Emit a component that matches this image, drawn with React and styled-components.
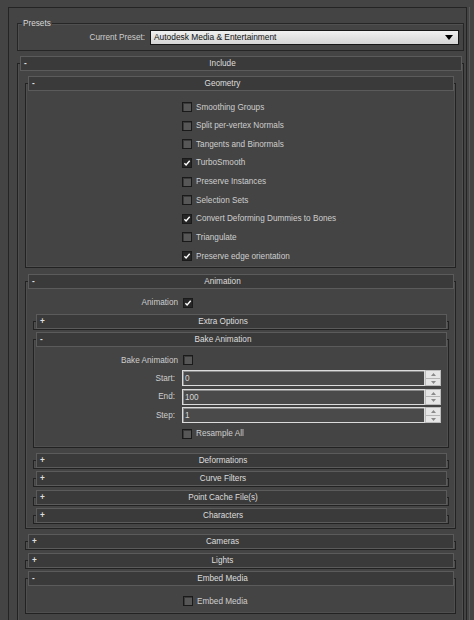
import React from "react";
import styled, { createGlobalStyle } from "styled-components";

const GlobalStyle = createGlobalStyle`
  html, body {
    margin: 0;
    background: #444444;
  }
  body {
    font-family: "Liberation Sans", Arial, sans-serif;
    font-size: 8.2px;
    line-height: 11px;
    color: #cecece;
  }
`;

const Panel = styled.div`
  box-sizing: border-box;
  width: 459px;
  margin: 7px 0 0 8px;
  padding: 0 2px 0 8px;
  border: 1px solid #242424;
  border-bottom: none;
  box-shadow: 2px 0 0 #444444, 3px 0 0 #5a5a5a;
`;

const GroupBox = styled.div`
  position: relative;
  margin-top: 15px;
  border: 1px solid #262626;
  box-shadow: inset 1px 1px 0 #505050;
  padding: 6px 4px 5px 4px;
  display: grid;
  grid-template-columns: 123px 1fr;
  column-gap: 5px;
  align-items: center;
`;

const GroupLabel = styled.span`
  position: absolute;
  top: -6px;
  left: 4px;
  padding: 0 1px;
  background: #444444;
  color: #d8d8d8;
`;

const Label = styled.span`
  text-align: right;
  padding-right: ${(p) => p.$pr || 0}px;
  white-space: nowrap;
`;

const Select = styled.div`
  box-sizing: border-box;
  height: 15px;
  display: flex;
  align-items: center;
  justify-content: space-between;
  padding: 0 5px 0 3px;
  border: 1px solid #161616;
  background: linear-gradient(#f0f0f0, #d4d4d4);
  color: #111111;
  font-size: 8.4px;
`;

const Frame = styled.section`
  border: 1px solid #222222;
  box-shadow: inset 1px 0 0 #4f4f4f, inset -1px 0 0 #4f4f4f, inset 0 -1px 0 #4f4f4f;
  margin-top: ${(p) => p.$mt ?? 9.5}px;
  margin-bottom: ${(p) => (p.$open ? 12 : 0)}px;
  padding: 0 1px 0 2px;
`;

const Bar = styled.div`
  box-sizing: border-box;
  height: 15px;
  margin-top: -8px;
  display: grid;
  grid-template-columns: 14px 1fr 14px;
  align-items: center;
  background: #3a3a3a;
  border: 1px solid #5b5b5b;
  color: #dedede;
`;

const Toggle = styled.span`
  padding-left: 3px;
  font-weight: bold;
`;

const Title = styled.span`
  text-align: center;
  padding-right: 37px;
`;

const Body = styled.div`
  padding: ${(p) => p.$pad};
`;

const CheckList = styled.div`
  display: flex;
  flex-direction: column;
  padding-left: ${(p) => p.$indent}px;
`;

const CheckRow = styled.label`
  display: flex;
  align-items: center;
  gap: 4px;
  height: ${(p) => p.$h || 14}px;
`;

const Box = styled.span`
  box-sizing: border-box;
  width: 10px;
  height: 10px;
  display: inline-flex;
  align-items: center;
  justify-content: center;
  border: 1px solid #1a1a1a;
  background: ${(p) => (p.$on ? "#262626" : "#575757")};
  box-shadow: ${(p) => (p.$on ? "none" : "inset 1px 1px 0 #3a3a3a")};
`;

const FieldRow = styled.div`
  display: grid;
  grid-template-columns: ${(p) => p.$label}px auto 1fr;
  column-gap: ${(p) => p.$gap}px;
  align-items: center;
  height: ${(p) => p.$h || 16}px;
  margin-top: ${(p) => p.$mt || 0}px;
  padding-right: ${(p) => p.$pr || 0}px;
`;

const SpinField = styled.div`
  grid-column: 2 / 4;
  display: flex;
  height: 16px;
`;

const Input = styled.div`
  box-sizing: border-box;
  flex: 1;
  border: 1px solid #dcdcdc;
  box-shadow: inset 1px 1px 0 #8a8a8a;
  background: #4a4a4a;
  color: #d6d6d6;
  padding: 2px 0 0 2px;
`;

const Spinner = styled.div`
  box-sizing: border-box;
  width: 16px;
  display: flex;
  flex-direction: column;
  border: 1px solid #bdbdbd;
  background: #e6e6e6;
`;

const SpinButton = styled.span`
  flex: 1;
  display: flex;
  align-items: center;
  justify-content: center;
  border-bottom: ${(p) => (p.$top ? "1px solid #b5b5b5" : "none")};
`;

function Check({ on }) {
  return (
    <Box $on={on}>
      {on && (
        <svg width="8" height="8" viewBox="0 0 8 8">
          <path d="M1.4 4.3 L3.1 6 L6.7 1.8" fill="none" stroke="#ffffff" strokeWidth="1.4" />
        </svg>
      )}
    </Box>
  );
}

function Rollout({ title, open, mt, pad, children }) {
  return (
    <Frame $open={open} $mt={mt}>
      <Bar>
        <Toggle>{open ? "-" : "+"}</Toggle>
        <Title>{title}</Title>
        <span />
      </Bar>
      {open && <Body $pad={pad}>{children}</Body>}
    </Frame>
  );
}

function Spin({ value }) {
  return (
    <SpinField>
      <Input>{value}</Input>
      <Spinner>
        <SpinButton $top>
          <svg width="5" height="3" viewBox="0 0 5 3">
            <path d="M0 3 L2.5 0 L5 3 Z" fill="#8a8a8a" />
          </svg>
        </SpinButton>
        <SpinButton>
          <svg width="5" height="3" viewBox="0 0 5 3">
            <path d="M0 0 L2.5 3 L5 0 Z" fill="#8a8a8a" />
          </svg>
        </SpinButton>
      </Spinner>
    </SpinField>
  );
}

const geometry = [
  ["Smoothing Groups", false],
  ["Split per-vertex Normals", false],
  ["Tangents and Binormals", false],
  ["TurboSmooth", true],
  ["Preserve Instances", false],
  ["Selection Sets", false],
  ["Convert Deforming Dummies to Bones", true],
  ["Triangulate", false],
  ["Preserve edge orientation", true],
];

const bakeFields = [
  ["Start:", "0"],
  ["End:", "100"],
  ["Step:", "1"],
];

const animationGroups = ["Deformations", "Curve Filters", "Point Cache File(s)", "Characters"];

export default function App() {
  return (
    <>
      <GlobalStyle />
      <Panel>
        <GroupBox>
          <GroupLabel>Presets</GroupLabel>
          <Label>Current Preset:</Label>
          <Select>
            <span>Autodesk Media &amp; Entertainment</span>
            <svg width="8" height="5" viewBox="0 0 8 5">
              <path d="M0 0 L8 0 L4 5 Z" fill="#000000" />
            </svg>
          </Select>
        </GroupBox>

        <Rollout title="Include" open mt={12} pad="1px 6px 40px 5px">
          <Rollout title="Geometry" open mt={11} pad="6.7px 0 2px 0">
            <CheckList $indent={154}>
              {geometry.map(([name, on]) => (
                <CheckRow key={name} $h={18.625}>
                  <Check on={on} />
                  <span>{name}</span>
                </CheckRow>
              ))}
            </CheckList>
          </Rollout>

          <Rollout title="Animation" open mt={13} pad="6.5px 5px 4px 5px">
            <FieldRow $label={145} $gap={5} $h={14}>
              <Label>Animation</Label>
              <Check on />
            </FieldRow>

            <Rollout title="Extra Options" mt={11} />

            <Rollout title="Bake Animation" open mt={9} pad="6px 0 5px 0">
              <FieldRow $label={142} $gap={5} $h={15}>
                <Label>Bake Animation</Label>
                <Check />
              </FieldRow>
              {bakeFields.map(([name, value]) => (
                <FieldRow key={name} $label={142} $gap={4} $mt={2.5} $pr={6}>
                  <Label $pr={3}>{name}</Label>
                  <Spin value={value} />
                </FieldRow>
              ))}
              <FieldRow $label={142} $gap={4} $mt={2.5}>
                <span />
                <CheckRow>
                  <Check />
                  <span>Resample All</span>
                </CheckRow>
              </FieldRow>
            </Rollout>

            {animationGroups.map((name) => (
              <Rollout key={name} title={name} />
            ))}
          </Rollout>

          <Rollout title="Cameras" mt={11} />
          <Rollout title="Lights" />
          <Rollout title="Embed Media" open pad="8px 0 5px 0">
            <CheckList $indent={155}>
              <CheckRow>
                <Check />
                <span>Embed Media</span>
              </CheckRow>
            </CheckList>
          </Rollout>
        </Rollout>
      </Panel>
    </>
  );
}
